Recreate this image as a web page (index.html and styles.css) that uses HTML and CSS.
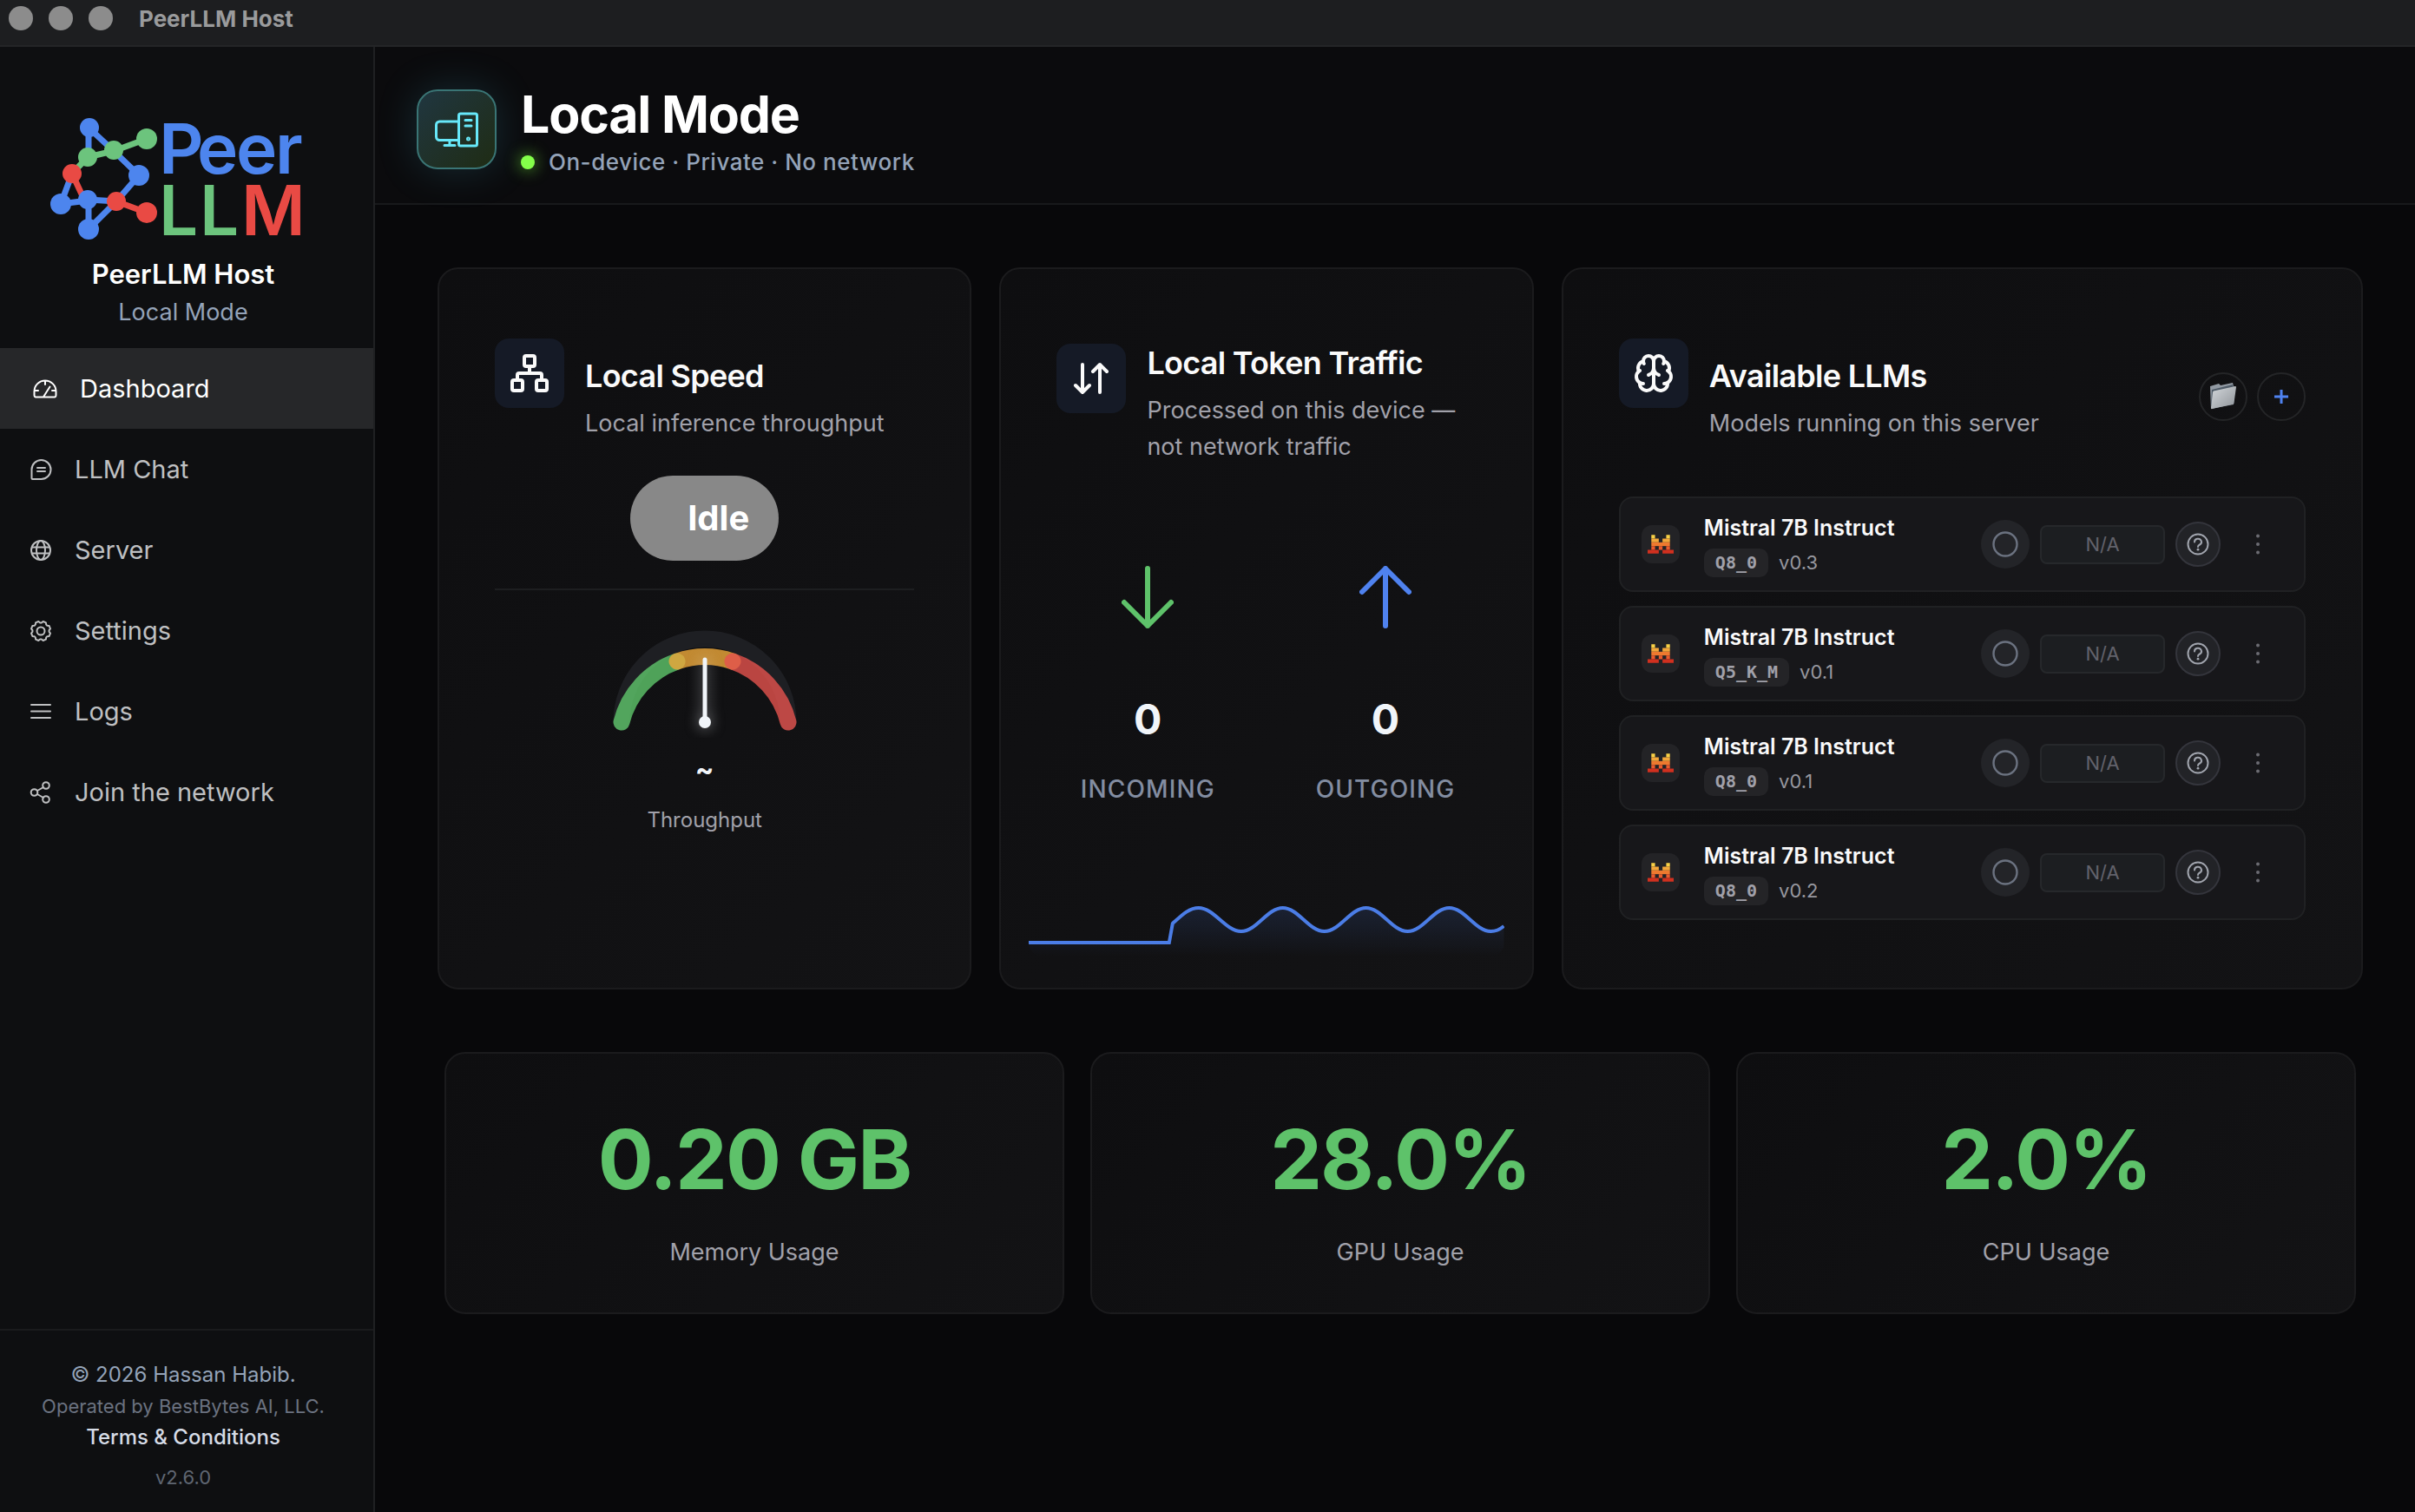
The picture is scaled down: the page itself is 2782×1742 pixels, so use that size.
FILE: index.html
```html
<!DOCTYPE html>
<html lang="en">
<head>
    <meta charset="UTF-8">
    <meta name="viewport" content="width=device-width, initial-scale=1.0">
    <title>PeerLLM Host</title>
    <link rel="stylesheet" href="styles.css">
</head>
<body>
    <!-- shared icons -->
    <svg class="sprite" aria-hidden="true">
        <symbol id="mistral" viewBox="0 0 7 5">
            <path fill="#f7d046" d="M1 0h1v1H1zM5 0h1v1H5z"/>
            <path fill="#f2a73b" d="M1 1h2v1H1zM4 1h2v1H4z"/>
            <path fill="#ee792f" d="M1 2h5v1H1z"/>
            <path fill="#ea5a2d" d="M1 3h1v1H1zM3 3h1v1H3zM5 3h1v1H5z"/>
            <path fill="#d1301f" d="M0 4h3v1H0zM4 4h3v1H4z"/>
        </symbol>
        <symbol id="ring" viewBox="0 0 30 30">
            <circle cx="15" cy="15" r="13.5" fill="none" stroke="#6b7280" stroke-width="2.4"/>
        </symbol>
        <symbol id="help" viewBox="0 0 26 26">
            <g fill="none" stroke="#a1a5ae" stroke-width="2" stroke-linecap="round">
                <circle cx="13" cy="13" r="11.5"/>
                <path d="M9 10.5a4 3.600 0 1 1 6 3c-1.500 .8-2 1.300-2 2.500"/>
            </g>
            <circle cx="13" cy="19.200" r="1.400" fill="#a1a5ae"/>
        </symbol>
        <symbol id="dots" viewBox="0 0 6 24">
            <g fill="#6c6c73"><circle cx="3" cy="2.500" r="2"/><circle cx="3" cy="12" r="2"/><circle cx="3" cy="21.500" r="2"/></g>
        </symbol>
    </svg>

    <div class="titlebar">
        <span class="light"></span>
        <span class="light"></span>
        <span class="light"></span>
        <span class="window-title">PeerLLM Host</span>
    </div>

    <div class="shell">
        <aside class="sidebar">
            <div class="brand">
                <svg class="logo" viewBox="0 0 320 152" role="img" aria-label="Peer LLM">
                    <g fill="none" stroke-width="7">
                        <path stroke="#4d85ee" d="M51 50V17l29 27 29 28-26 30-32 32v-34l32 2M32 70 19 105l31-4"/>
                        <path stroke="#e94a44" d="M32 70l14 30M83 102l35 13"/>
                        <path stroke="#6cc47d" d="M32 70l18-19 30-7 38-14"/>
                    </g>
                    <g fill="#4d85ee">
                        <circle cx="52" cy="17" r="11"/><circle cx="109" cy="72" r="12"/><circle cx="19" cy="105" r="12"/>
                        <circle cx="50" cy="100" r="11"/><circle cx="51" cy="134" r="12"/>
                    </g>
                    <g fill="#6cc47d"><circle cx="50" cy="51" r="11"/><circle cx="80" cy="43" r="11"/><circle cx="118" cy="30" r="12"/></g>
                    <g fill="#e94a44"><circle cx="32" cy="70" r="11"/><circle cx="83" cy="102" r="11"/><circle cx="118" cy="115" r="12"/></g>
                    <text class="logo-text" x="132 176 221 266" y="70" fill="#4d85ee">Peer</text>
                    <text class="logo-text" x="132 179 227" y="141" fill="#6cc47d">LL<tspan fill="#e94a44">M</tspan></text>
                </svg>
                <div class="brand-name">PeerLLM Host</div>
                <div class="brand-mode">Local Mode</div>
            </div>

            <nav class="nav">
                <a href="#" class="active">
                    <svg viewBox="0 0 28 22"><path d="M3 20.500a2 2 0 0 1-1.500-2V14a12.500 12.500 0 0 1 25 0v4.500a2 2 0 0 1-1.500 2zM14 2v4M2 13h4M22 13h4M12.500 19.500l7-11"/></svg>
                    Dashboard
                </a>
                <a href="#">
                    <svg viewBox="0 0 26 26"><path d="M13.500 2a11 11 0 0 1 0 22H3.500a1 1 0 0 1-1-1V13a11 11 0 0 1 11-11zM9 11h9M9 15h9"/></svg>
                    LLM Chat
                </a>
                <a href="#">
                    <svg viewBox="0 0 26 26"><circle cx="13" cy="13" r="11"/><ellipse cx="13" cy="13" rx="5" ry="11"/><path d="M3 9.500h20M3 16.500h20"/></svg>
                    Server
                </a>
                <a href="#">
                    <svg viewBox="-1 -1 26 26"><path d="M11.160 2.440 9.360 1.010 6.100 2.370 5.830 4.650 4.650 5.830 2.370 6.100 1.010 9.360 2.440 11.160V12.840L1.010 14.640 2.370 17.900 4.650 18.170 5.830 19.350 6.100 21.630 9.360 22.990 11.160 21.560H12.840L14.640 22.990 17.900 21.630 18.170 19.350 19.350 18.170 21.630 17.900 22.990 14.640 21.560 12.840V11.160L22.990 9.360 21.630 6.100 19.350 5.830 18.170 4.650 17.900 2.370 14.640 1.010 12.840 2.440z"/><circle cx="12" cy="12" r="4.500"/></svg>
                    Settings
                </a>
                <a href="#">
                    <svg viewBox="0 0 26 26"><path d="M2 5h22M2 12.500h22M2 20h22"/></svg>
                    Logs
                </a>
                <a href="#">
                    <svg viewBox="0 0 26 26"><circle cx="5.500" cy="13" r="3.800"/><circle cx="19" cy="5" r="3.800"/><circle cx="19" cy="21" r="3.800"/><path d="m9 11 7-4M9 15l7 4"/></svg>
                    Join the network
                </a>
            </nav>

            <div class="sidebar-footer">
                <div class="copyright">© 2026 Hassan Habib.</div>
                <div class="operator">Operated by BestBytes AI, LLC.</div>
                <a href="#">Terms &amp; Conditions</a>
                <div class="version">v2.6.0</div>
            </div>
        </aside>

        <main class="main">
            <header class="page-header">
                <div class="mode-icon">
                    <svg viewBox="0 0 50 42"><path d="M27 12H5.500a4 4 0 0 0-4 4v13.500a4 4 0 0 0 4 4H27M17 34v5M11 39.500h12"/><rect x="27.500" y="3" width="21" height="37" rx="2"/><path d="M35 10.500h7M35 17h7"/><circle cx="38.500" cy="32" r="1"/></svg>
                </div>
                <div class="mode-text">
                    <h1>Local Mode</h1>
                    <p class="mode-status"><span class="status-dot"></span>On-device · Private · No network</p>
                </div>
            </header>

            <div class="content">
                <div class="cards">
                    <section class="card">
                        <div class="card-head">
                            <div class="card-icon">
                                <svg viewBox="0 0 24 24"><rect x="16" y="16" width="6" height="6" rx="1"/><rect x="2" y="16" width="6" height="6" rx="1"/><rect x="9" y="2" width="6" height="6" rx="1"/><path d="M5 16v-3a1 1 0 0 1 1-1h12a1 1 0 0 1 1 1v3M12 12V8"/></svg>
                            </div>
                            <div class="card-title">
                                <h2>Local Speed</h2>
                                <p>Local inference throughput</p>
                            </div>
                        </div>
                        <div class="speed-status"><span class="pill">Idle</span></div>
                        <div class="gauge">
                            <svg viewBox="0 0 240 130">
                                <g fill="none" stroke-width="19" stroke-linecap="round">
                                    <path stroke="#1e1f23" d="M24 112a96 96 0 0 1 192 0"/>
                                    <g stroke-opacity=".8">
                                        <path stroke="#5fc76c" d="M24 112a99 99 0 0 1 64-70"/>
                                        <path stroke="#efa93b" d="M88 42a99 99 0 0 1 64 0"/>
                                        <path stroke="#e5534d" d="M152 42a99 99 0 0 1 64 70"/>
                                    </g>
                                </g>
                                <g class="needle"><path d="M120 40v72" stroke="#f1f5f9" stroke-width="5" stroke-linecap="round"/><circle cx="120" cy="112" r="7" fill="#f1f5f9"/></g>
                            </svg>
                            <div class="gauge-value">~</div>
                            <div class="gauge-label">Throughput</div>
                        </div>
                    </section>

                    <section class="card">
                        <div class="card-head two-line">
                            <div class="card-icon">
                                <svg viewBox="0 0 24 24"><path d="m3 16 4 4 4-4M7 20V4M21 8l-4-4-4 4M17 4v16"/></svg>
                            </div>
                            <div class="card-title">
                                <h2>Local Token Traffic</h2>
                                <p>Processed on this device — not network traffic</p>
                            </div>
                        </div>
                        <div class="traffic">
                            <div>
                                <svg viewBox="0 0 60 72" stroke="#5ec26a"><path d="M30 3v66M3 42l27 27 27-27"/></svg>
                                <div class="traffic-value">0</div>
                                <div class="traffic-label">Incoming</div>
                            </div>
                            <div>
                                <svg viewBox="0 0 60 72" stroke="#4f82ef"><path d="M30 69V3M3 30 30 3l27 27"/></svg>
                                <div class="traffic-value">0</div>
                                <div class="traffic-label">Outgoing</div>
                            </div>
                        </div>
                        <svg class="chart" viewBox="0 0 548 64" preserveAspectRatio="none">
                            <defs>
                                <linearGradient id="fade" x1="0" y1="0" x2="0" y2="1">
                                    <stop offset="0" stop-color="#4f82ef" stop-opacity=".14"/>
                                    <stop offset="1" stop-color="#4f82ef" stop-opacity="0"/>
                                </linearGradient>
                            </defs>
                            <path fill="url(#fade)" d="M0 48H162L166 26C177 16 185 8 196 8 214 8 227 35 245 35S275 8 293 8s30 27 48 27S371 8 389 8s30 27 48 27S467 8 485 8s30 27 48 27q8 0 15-6V64H0z"/>
                            <path fill="none" stroke="#4b7de6" stroke-width="4" d="M0 48H162L166 26C177 16 185 8 196 8 214 8 227 35 245 35S275 8 293 8s30 27 48 27S371 8 389 8s30 27 48 27S467 8 485 8s30 27 48 27q8 0 15-6"/>
                        </svg>
                    </section>

                    <section class="card">
                        <div class="card-head">
                            <div class="card-icon">
                                <svg viewBox="0 0 24 24"><path d="M12 5a3 3 0 1 0-5.997.125 4 4 0 0 0-2.526 5.770 4 4 0 0 0 .556 6.588A4 4 0 1 0 12 18Z"/><path d="M12 5a3 3 0 1 1 5.997.125 4 4 0 0 1 2.526 5.770 4 4 0 0 1-.556 6.588A4 4 0 1 1 12 18Z"/><path d="M15 13a4.500 4.500 0 0 1-3-4 4.500 4.500 0 0 1-3 4M17.599 6.500a3 3 0 0 0 .399-1.375M6.003 5.125A3 3 0 0 0 6.401 6.500M3.477 10.896a4 4 0 0 1 .585-.396M19.938 10.500a4 4 0 0 1 .585.396M6 18a4 4 0 0 1-1.967-.516M19.967 17.484A4 4 0 0 1 18 18"/></svg>
                            </div>
                            <div class="card-title">
                                <h2>Available LLMs</h2>
                                <p>Models running on this server</p>
                            </div>
                            <div class="head-actions">
                                <button type="button" aria-label="Open folder">
                                    <svg viewBox="0 0 32 32">
                                        <defs>
                                            <linearGradient id="folder" x1="0" y1="0" x2="1" y2="1">
                                                <stop offset="0" stop-color="#d3d7db"/>
                                                <stop offset="1" stop-color="#8f9499"/>
                                            </linearGradient>
                                        </defs>
                                        <path fill="#929aa3" d="M1 4 11 1l2 2 14-3 1 4 2 1-2 20-26 5z"/>
                                        <path fill="#4e5a66" d="M3 8 27 2l1 3L5 11 4 28 2 27z"/>
                                        <path fill="url(#folder)" d="M5 9.500 30 4q1 0 1 1l-2.500 18q0 1-1 1.500L3.500 30Q2 30.500 2 29L4 11q0-1 1-1.500z"/>
                                    </svg>
                                </button>
                                <button type="button" aria-label="Add model">
                                    <svg viewBox="0 0 32 32"><path d="M16 8v16M8 16h16" stroke="#4f82ef" stroke-width="3"/></svg>
                                </button>
                            </div>
                        </div>
                        <ul class="models">
                            <li>
                                <span class="model-logo"><svg><use href="#mistral"/></svg></span>
                                <div class="model-info">
                                    <div class="model-name">Mistral 7B Instruct</div>
                                    <div class="model-meta"><span class="quant">Q8_0</span>v0.3</div>
                                </div>
                                <button type="button" class="toggle" aria-label="Start model"><svg><use href="#ring"/></svg></button>
                                <span class="usage">N/A</span>
                                <button type="button" class="help" aria-label="Help"><svg><use href="#help"/></svg></button>
                                <button type="button" class="more" aria-label="More"><svg><use href="#dots"/></svg></button>
                            </li>
                            <li>
                                <span class="model-logo"><svg><use href="#mistral"/></svg></span>
                                <div class="model-info">
                                    <div class="model-name">Mistral 7B Instruct</div>
                                    <div class="model-meta"><span class="quant">Q5_K_M</span>v0.1</div>
                                </div>
                                <button type="button" class="toggle" aria-label="Start model"><svg><use href="#ring"/></svg></button>
                                <span class="usage">N/A</span>
                                <button type="button" class="help" aria-label="Help"><svg><use href="#help"/></svg></button>
                                <button type="button" class="more" aria-label="More"><svg><use href="#dots"/></svg></button>
                            </li>
                            <li>
                                <span class="model-logo"><svg><use href="#mistral"/></svg></span>
                                <div class="model-info">
                                    <div class="model-name">Mistral 7B Instruct</div>
                                    <div class="model-meta"><span class="quant">Q8_0</span>v0.1</div>
                                </div>
                                <button type="button" class="toggle" aria-label="Start model"><svg><use href="#ring"/></svg></button>
                                <span class="usage">N/A</span>
                                <button type="button" class="help" aria-label="Help"><svg><use href="#help"/></svg></button>
                                <button type="button" class="more" aria-label="More"><svg><use href="#dots"/></svg></button>
                            </li>
                            <li>
                                <span class="model-logo"><svg><use href="#mistral"/></svg></span>
                                <div class="model-info">
                                    <div class="model-name">Mistral 7B Instruct</div>
                                    <div class="model-meta"><span class="quant">Q8_0</span>v0.2</div>
                                </div>
                                <button type="button" class="toggle" aria-label="Start model"><svg><use href="#ring"/></svg></button>
                                <span class="usage">N/A</span>
                                <button type="button" class="help" aria-label="Help"><svg><use href="#help"/></svg></button>
                                <button type="button" class="more" aria-label="More"><svg><use href="#dots"/></svg></button>
                            </li>
                        </ul>
                    </section>
                </div>

                <div class="stats">
                    <div class="stat">
                        <div class="stat-value">0.20 GB</div>
                        <div class="stat-label">Memory Usage</div>
                    </div>
                    <div class="stat">
                        <div class="stat-value">28.0%</div>
                        <div class="stat-label">GPU Usage</div>
                    </div>
                    <div class="stat">
                        <div class="stat-value">2.0%</div>
                        <div class="stat-label">CPU Usage</div>
                    </div>
                </div>
            </div>
        </main>
    </div>
</body>
</html>
```
FILE: styles.css
```css
* {
    box-sizing: border-box;
}
body {
    margin: 0;
    min-height: 100vh;
    display: flex;
    flex-direction: column;
    background: #08080a;
    color: #fafafa;
    font-family: Inter, "Liberation Sans", sans-serif;
    font-size: 27px;
}
h1, h2, p, ul {
    margin: 0;
    padding: 0;
}
a {
    color: inherit;
    text-decoration: none;
}
button {
    padding: 0;
    border: 0;
    background: none;
    color: inherit;
    display: flex;
    align-items: center;
    justify-content: center;
}
.sprite {
    display: none;
}

/* title bar */
.titlebar {
    height: 54px;
    padding: 0 10px 10px;
    display: flex;
    align-items: center;
    gap: 18px;
    background: #1d1e20;
    border-bottom: 2px solid #242527;
}
.light {
    width: 28px;
    height: 28px;
    border-radius: 50%;
    background: #8c8c8c;
}
.window-title {
    margin-left: 12px;
    color: #9a9b9c;
    font-size: 26px;
    font-weight: 700;
}

/* sidebar */
.shell {
    flex: 1;
    display: flex;
}
.sidebar {
    width: 432px;
    flex-shrink: 0;
    display: flex;
    flex-direction: column;
    background: #0e0f11;
    border-right: 2px solid #1f2022;
}
.brand {
    padding: 76px 8px 18px 0;
    text-align: center;
}
.logo {
    display: block;
    width: 320px;
    height: 152px;
    margin: 0 auto 13px;
    overflow: visible;
}
.logo-text {
    font-size: 80px;
    font-weight: 600;
}
.brand-name {
    color: #fff;
    font-size: 31px;
    font-weight: 600;
    line-height: 42px;
}
.brand-mode {
    color: #94a3b8;
    font-size: 27px;
    line-height: 46px;
}
.nav a {
    height: 93px;
    padding-left: 34px;
    display: flex;
    align-items: center;
    gap: 26px;
    color: #bfc0c2;
    font-size: 29px;
}
.nav svg {
    width: 26px;
    height: 26px;
    fill: none;
    stroke: currentColor;
    stroke-width: 2;
    stroke-linecap: round;
    stroke-linejoin: round;
}
.nav .active {
    padding-left: 38px;
    background: #262729;
    color: #fff;
}
.nav .active svg {
    width: 28px;
    height: 22px;
}
.sidebar-footer {
    margin-top: auto;
    padding: 33px 8px 22px 0;
    border-top: 2px solid #1a1b1d;
    text-align: center;
    line-height: 36px;
}
.copyright {
    color: #94a3b8;
    font-size: 24px;
}
.operator {
    color: #6b7280;
    font-size: 22px;
}
.sidebar-footer a {
    display: block;
    color: #d6dce6;
    font-size: 24px;
    font-weight: 500;
}
.version {
    margin-top: 10px;
    color: #5f6672;
    font-size: 22px;
}

/* page header */
.main {
    flex: 1;
    min-width: 0;
}
.page-header {
    height: 182px;
    padding: 10px 48px 0;
    display: flex;
    align-items: center;
    gap: 28px;
    background: #0b0b0d;
    border-bottom: 2px solid #18191b;
}
.mode-icon {
    width: 92px;
    height: 92px;
    display: flex;
    align-items: center;
    justify-content: center;
    border: 2px solid #3a7575;
    border-radius: 24px;
    background: linear-gradient(135deg, #203640, #1f2c14);
    box-shadow: 0 0 48px rgba(70, 190, 220, 0.18);
}
.mode-icon svg {
    width: 50px;
    height: 42px;
    fill: none;
    stroke: #67e8f9;
    stroke-width: 3;
    stroke-linecap: round;
    stroke-linejoin: round;
}
.mode-text {
    padding-top: 4px;
}
h1 {
    color: #fff;
    font-size: 59px;
    font-weight: 700;
    line-height: 72px;
    letter-spacing: -0.02em;
}
.mode-status {
    display: flex;
    align-items: center;
    gap: 16px;
    color: #94a3b8;
    font-size: 26px;
    font-weight: 500;
    line-height: 38px;
    letter-spacing: 0.02em;
}
.status-dot {
    width: 16px;
    height: 16px;
    border-radius: 50%;
    background: #84ff4a;
    box-shadow: 0 0 18px #5fbf33;
}

/* cards */
.content {
    padding: 72px 60px 72px 72px;
}
.cards {
    display: grid;
    grid-template-columns: 1fr 1fr 1.5fr;
    gap: 32px;
}
.card, .stat {
    border: 2px solid #1b1b1d;
    border-radius: 24px;
    background: linear-gradient(135deg, #0e0e10, #131315);
}
.card {
    padding: 64px;
    display: flex;
    flex-direction: column;
    min-width: 0;
}
.card-head {
    height: 166px;
    padding-top: 16px;
    display: flex;
    gap: 24px;
}
.card-icon {
    width: 80px;
    height: 80px;
    flex-shrink: 0;
    display: flex;
    align-items: center;
    justify-content: center;
    border-radius: 16px;
    background: #151a26;
}
.card-icon svg {
    width: 48px;
    height: 48px;
    fill: none;
    stroke: #fafafa;
    stroke-width: 2;
    stroke-linecap: round;
    stroke-linejoin: round;
}
.card-title {
    flex: 1;
    padding-top: 21px;
}
.card-head.two-line {
    padding-top: 22px;
}
.two-line .card-title {
    padding-top: 0;
}
h2 {
    margin-bottom: 12px;
    font-size: 36px;
    font-weight: 600;
    line-height: 44px;
    letter-spacing: -0.02em;
}
.card-title p {
    color: #a1a1aa;
    line-height: 42px;
}
.head-actions {
    display: flex;
    align-items: center;
    gap: 11px;
}
.head-actions button {
    width: 56px;
    height: 56px;
    margin-bottom: 16px;
    border: 2px solid #242527;
    border-radius: 50%;
}
.head-actions svg {
    width: 32px;
    height: 32px;
}

/* speed */
.speed-status {
    padding: 8px 0 32px;
    display: flex;
    justify-content: center;
    border-bottom: 2px solid #1d1e20;
}
.pill {
    padding: 0 34px 0 66px;
    border-radius: 49px;
    background: #888;
    color: #fff;
    font-size: 40px;
    font-weight: 700;
    line-height: 98px;
}
.gauge {
    padding-top: 40px;
    text-align: center;
}
.gauge svg {
    display: block;
    width: 240px;
    height: 130px;
    margin: 0 auto 17px;
}
.needle {
    filter: drop-shadow(0 0 8px rgba(241, 245, 249, 0.5));
}
.gauge-value {
    color: #f1f5f9;
    font-size: 32px;
    font-weight: 700;
    line-height: 40px;
}
.gauge-label {
    margin-top: 22px;
    color: #a1a1aa;
    font-size: 24px;
    line-height: 32px;
}

/* traffic */
.traffic {
    margin-top: 112px;
    display: grid;
    grid-template-columns: 1fr 1fr;
    gap: 64px;
    text-align: center;
}
.traffic svg {
    display: block;
    width: 60px;
    height: 72px;
    margin: 0 auto;
    fill: none;
    stroke-width: 6;
    stroke-linecap: round;
    stroke-linejoin: round;
}
.traffic-value {
    margin-top: 76px;
    color: #f1f5f9;
    font-size: 48px;
    font-weight: 700;
    line-height: 58px;
}
.traffic-label {
    margin-top: 33px;
    color: #838da1;
    font-size: 28px;
    font-weight: 500;
    line-height: 36px;
    letter-spacing: 0.04em;
    text-transform: uppercase;
}
.chart {
    height: 64px;
    margin: auto -32px -28px;
    border-radius: 0 0 16px 16px;
}

/* models */
.models {
    margin: 32px 0 14px;
    display: flex;
    flex-direction: column;
    gap: 16px;
    list-style: none;
}
.models li {
    height: 110px;
    padding: 0 22px 0 24px;
    display: flex;
    align-items: center;
    gap: 12px;
    border: 2px solid #202123;
    border-radius: 16px;
    background: #17171a;
}
.model-logo {
    width: 44px;
    height: 44px;
    margin-right: 16px;
    display: flex;
    align-items: center;
    justify-content: center;
    border-radius: 12px;
    background: #232326;
}
.model-logo svg {
    width: 30px;
    height: 22px;
}
.model-info {
    flex: 1;
}
.model-name {
    font-size: 25px;
    font-weight: 600;
    line-height: 36px;
}
.model-meta {
    margin-top: 6px;
    display: flex;
    align-items: center;
    gap: 12px;
    color: #97979f;
    font-size: 22px;
}
.quant {
    padding: 0 13px;
    border-radius: 10px;
    background: #242427;
    color: #a1a1aa;
    font-family: "DejaVu Sans Mono", monospace;
    font-size: 20px;
    font-weight: 700;
    line-height: 33px;
}
.toggle {
    width: 56px;
    height: 56px;
    border-radius: 50%;
    background: #232428;
}
.toggle svg {
    width: 30px;
    height: 30px;
}
.usage {
    width: 144px;
    border: 2px solid #26282b;
    border-radius: 8px;
    background: #1c1e21;
    color: #62626b;
    font-size: 22px;
    line-height: 41px;
    text-align: center;
}
.help {
    width: 52px;
    height: 52px;
    border: 2px solid #34353c;
    border-radius: 50%;
    background: #222327;
}
.help svg {
    width: 26px;
    height: 26px;
}
.more {
    width: 62px;
    height: 52px;
}
.more svg {
    width: 6px;
    height: 24px;
}

/* usage stats */
.stats {
    margin: 72px 8px 0;
    display: grid;
    grid-template-columns: 1fr 1fr 1fr;
    gap: 30px;
}
.stat {
    padding: 64px 24px 48px;
    text-align: center;
}
.stat-value {
    color: #5ec26a;
    font-size: 95px;
    font-weight: 700;
    line-height: 116px;
    letter-spacing: -0.02em;
}
.stat-label {
    margin-top: 28px;
    color: #a1a1aa;
    line-height: 42px;
}
```
